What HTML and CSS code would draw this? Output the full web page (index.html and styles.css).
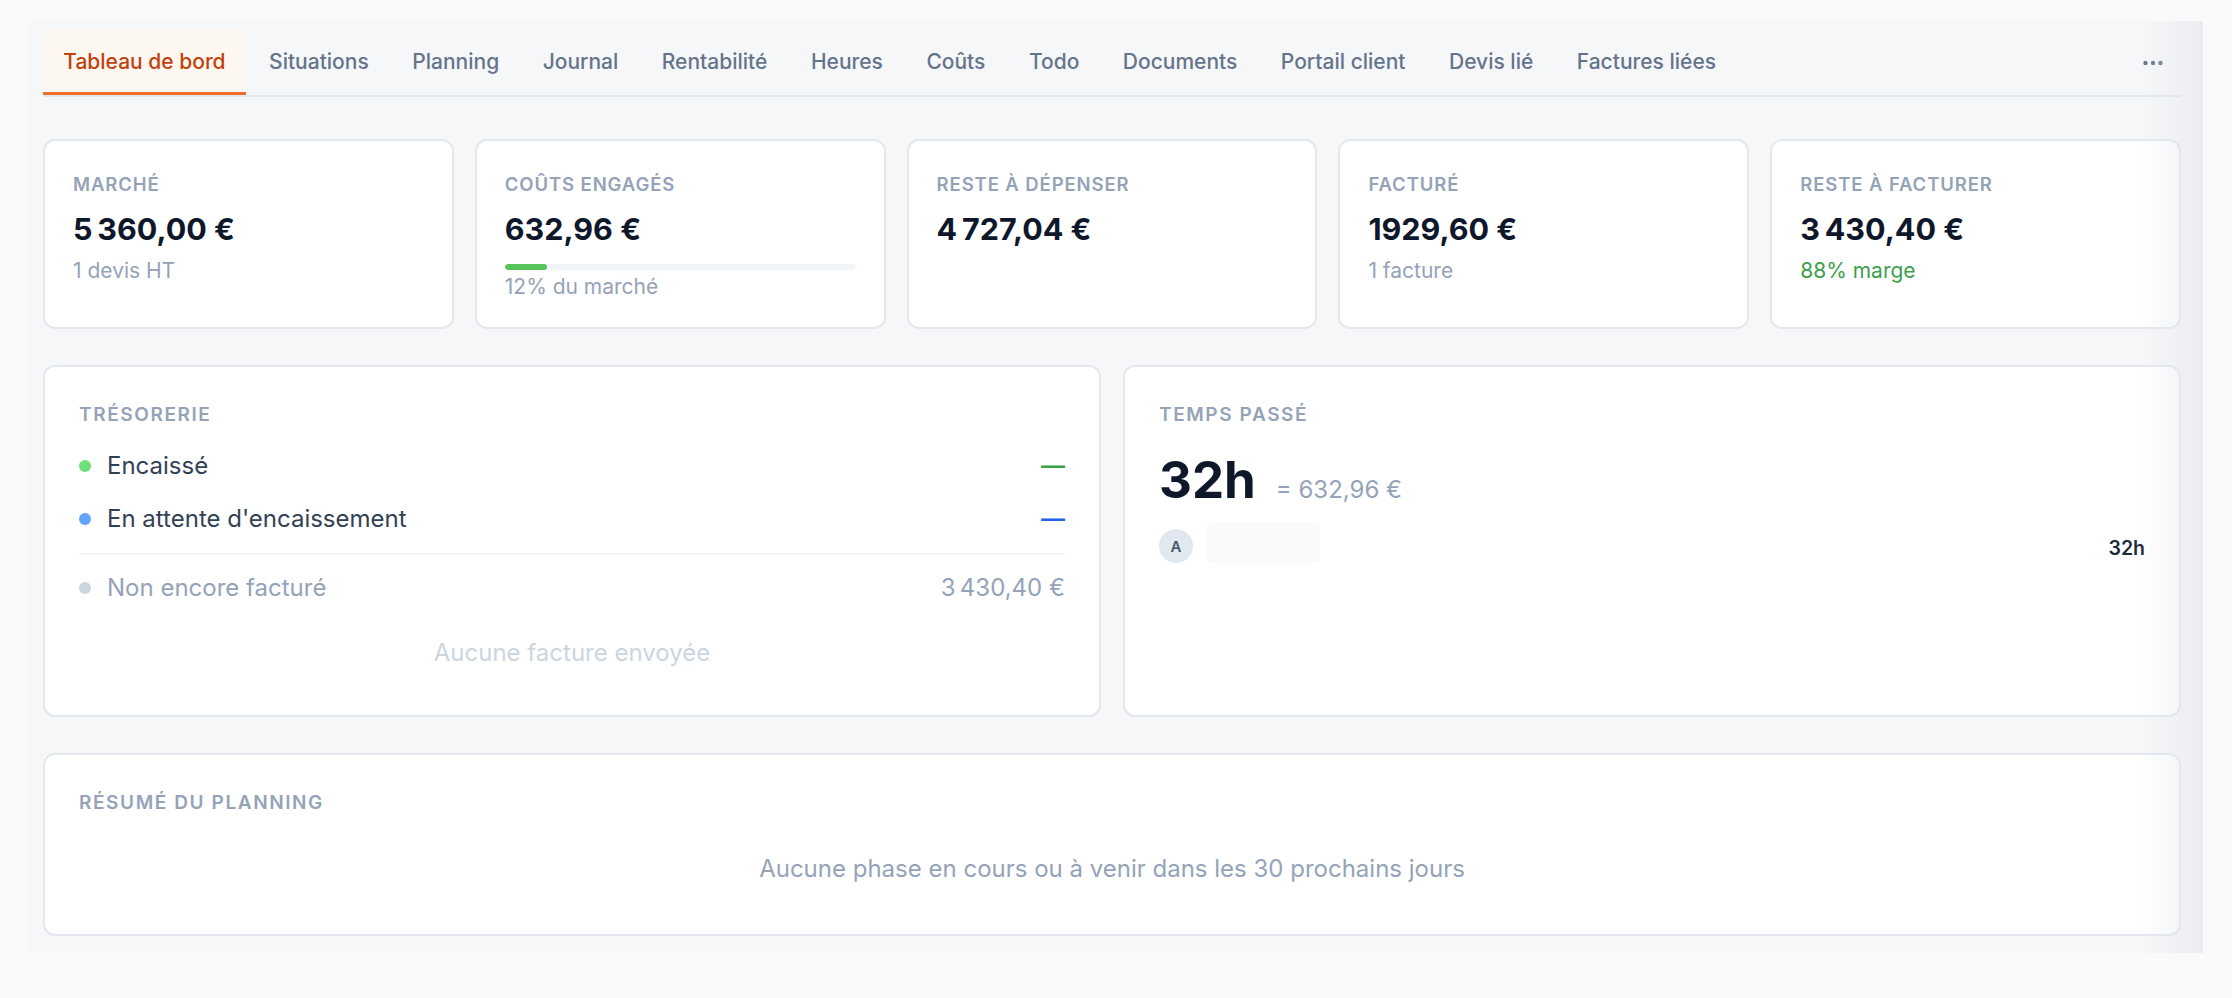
FILE: index.html
```html
<!DOCTYPE html>
<html lang="fr">
<head>
  <meta charset="UTF-8" />
  <meta name="viewport" content="width=device-width, initial-scale=1.0"/>
  <title>Chantier - Tableau de bord</title>
  <link rel="stylesheet" href="styles.css">
</head>
<body>
  <div class="panel">
    <nav class="tabs">
      <a class="tab active">Tableau de bord</a>
      <a class="tab">Situations</a>
      <a class="tab">Planning</a>
      <a class="tab">Journal</a>
      <a class="tab">Rentabilité</a>
      <a class="tab">Heures</a>
      <a class="tab">Coûts</a>
      <a class="tab">Todo</a>
      <a class="tab">Documents</a>
      <a class="tab">Portail client</a>
      <a class="tab">Devis lié</a>
      <a class="tab">Factures liées</a>
      <button class="more-btn" aria-label="Plus">
        <svg width="20" height="6" viewBox="0 0 20 6"><circle cx="2.5" cy="3" r="2.2"/><circle cx="10" cy="3" r="2.2"/><circle cx="17.5" cy="3" r="2.2"/></svg>
      </button>
    </nav>

    <section class="kpis">
      <div class="card kpi">
        <div class="label">Marché</div>
        <div class="value">5&#8239;360,00 €</div>
        <div class="sub">1 devis HT</div>
      </div>
      <div class="card kpi">
        <div class="label">Coûts engagés</div>
        <div class="value">632,96 €</div>
        <div class="bar"><div class="bar-fill" style="width: 12%"></div></div>
        <div class="sub tight">12% du marché</div>
      </div>
      <div class="card kpi">
        <div class="label">Reste à dépenser</div>
        <div class="value">4&#8239;727,04 €</div>
      </div>
      <div class="card kpi">
        <div class="label">Facturé</div>
        <div class="value">1929,60 €</div>
        <div class="sub">1 facture</div>
      </div>
      <div class="card kpi">
        <div class="label">Reste à facturer</div>
        <div class="value">3&#8239;430,40 €</div>
        <div class="sub green">88% marge</div>
      </div>
    </section>

    <section class="split">
      <div class="card box">
        <div class="label">Trésorerie</div>
        <ul class="cash">
          <li><span class="dot dot-green"></span><span class="name">Encaissé</span><span class="amount green">—</span></li>
          <li><span class="dot dot-blue"></span><span class="name">En attente d'encaissement</span><span class="amount blue">—</span></li>
          <li class="sep"></li>
          <li class="muted"><span class="dot dot-gray"></span><span class="name">Non encore facturé</span><span class="amount">3&#8239;430,40 €</span></li>
        </ul>
        <p class="empty faint">Aucune facture envoyée</p>
      </div>

      <div class="card box">
        <div class="label">Temps passé</div>
        <div class="hours">
          <span class="hours-big">32h</span>
          <span class="hours-cost">= 632,96 €</span>
        </div>
        <div class="person">
          <span class="avatar">A</span>
          <span class="person-name"></span>
          <span class="person-hours">32h</span>
        </div>
      </div>
    </section>

    <section class="card box planning">
      <div class="label">Résumé du planning</div>
      <p class="empty">Aucune phase en cours ou à venir dans les 30 prochains jours</p>
    </section>
  </div>
</body>
</html>
```

FILE: styles.css
```css
body { margin: 0; font-family: Inter, "Noto Sans", sans-serif; background-color: #f9fafb; color: #0f172a; }

.panel {
  position: relative;
  margin: 21px 29px 0 29px;
  padding: 8px 22px 17px 14px;
  background-color: #f6f7f9;
}
.panel::after {
  content: ""; position: absolute; top: 0; right: 0; bottom: 0; width: 64px;
  background: linear-gradient(to right, rgba(225, 228, 234, 0), rgba(225, 228, 234, 0.55));
  pointer-events: none;
}

/* tabs */
.tabs {
  display: flex; align-items: stretch; gap: 3px;
  border-bottom: 2px solid #e2e8f0;
}
.tab {
  display: flex; align-items: center;
  height: 61px; padding: 2px 20.25px 0;
  border-bottom: 3px solid transparent;
  border-radius: 12px 12px 0 0;
  font-size: 21px; font-weight: 500; color: #64748b;
  white-space: nowrap; cursor: pointer;
}
.tab.active { color: #c2410c; background-color: #fcf7f1; border-bottom-color: #ee6f2d; }
.more-btn {
  margin-left: auto; margin-right: 16px;
  background: none; border: none; padding: 2px 2px 0; cursor: pointer;
  display: flex; align-items: center; fill: #64748b;
}

/* cards */
.card {
  background-color: #fff;
  border: 2px solid #e3e8ef;
  border-radius: 12px;
}
.label {
  font-size: 19px; line-height: 27px; font-weight: 600;
  text-transform: uppercase; letter-spacing: 1.6px; color: #94a3b8;
}

.kpis {
  display: grid; grid-template-columns: repeat(5, 1fr); gap: 21px;
  margin-top: 42px;
}
.kpi { padding: 29.5px 28px 26.5px; }
.kpi .label { font-size: 18.5px; letter-spacing: 0.9px; }
.kpi .value { margin-top: 13px; font-size: 30.5px; line-height: 36px; font-weight: 700; color: #0f172a; }
.kpi .sub { margin-top: 10px; font-size: 21px; line-height: 28px; color: #94a3b8; }
.kpi .sub.tight { margin-top: 3px; }
.kpi .sub.green { color: #3da14a; }
.bar { margin-top: 17px; height: 6px; border-radius: 3px; background-color: #f1f5f9; overflow: hidden; }
.bar-fill { height: 100%; border-radius: 3px; background-color: #58c45c; }

.split {
  display: grid; grid-template-columns: 1fr 1fr; gap: 22px;
  margin-top: 36px;
}
.box { padding: 34px; }

/* tresorerie */
.cash { list-style: none; margin: 20px 0 0; padding: 0; display: flex; flex-direction: column; gap: 17px; }
.cash li { display: flex; align-items: center; font-size: 24px; line-height: 36px; color: #334155; }
.cash .dot { width: 12px; height: 12px; border-radius: 50%; margin-right: 16px; flex-shrink: 0; }
.cash .name { flex: 1; }
.cash .amount { font-weight: 600; }
.cash .sep { height: 2px; background-color: #f1f4f8; margin: -1px 0 -2px; }
.cash li.muted { color: #94a3b8; }
.cash li.muted .amount { font-weight: 400; }
.dot-green { background-color: #6ee07a; }
.dot-blue { background-color: #60a5fa; }
.dot-gray { background-color: #cbd5e1; }
.amount.green { color: #3da14a; }
.amount.blue { color: #2563eb; }

.empty {
  margin: 0; padding: 29px 0 10px;
  text-align: center; font-size: 24px; line-height: 36px; color: #94a3b8;
}
.empty.faint { color: #cbd5e1; }

/* temps passe */
.hours { display: flex; align-items: baseline; gap: 20px; margin-top: 26px; }
.hours-big { font-size: 51px; line-height: 51px; font-weight: 700; color: #0f172a; }
.hours-cost { font-size: 24px; color: #94a3b8; }
.person { display: flex; align-items: flex-end; gap: 13px; margin-top: 18px; }
.avatar {
  width: 34px; height: 34px; border-radius: 50%;
  background-color: #e2e8f0; color: #475569;
  display: flex; align-items: center; justify-content: center;
  font-size: 15px; font-weight: 600;
}
.person-name { width: 114px; height: 40px; border-radius: 6px; background-color: #f8fafc; }
.person-hours { margin-left: auto; font-size: 19.5px; line-height: 30px; font-weight: 600; color: #1e293b; }

.planning { margin-top: 36px; }
.planning .empty { padding-top: 35px; padding-bottom: 13px; }
```
